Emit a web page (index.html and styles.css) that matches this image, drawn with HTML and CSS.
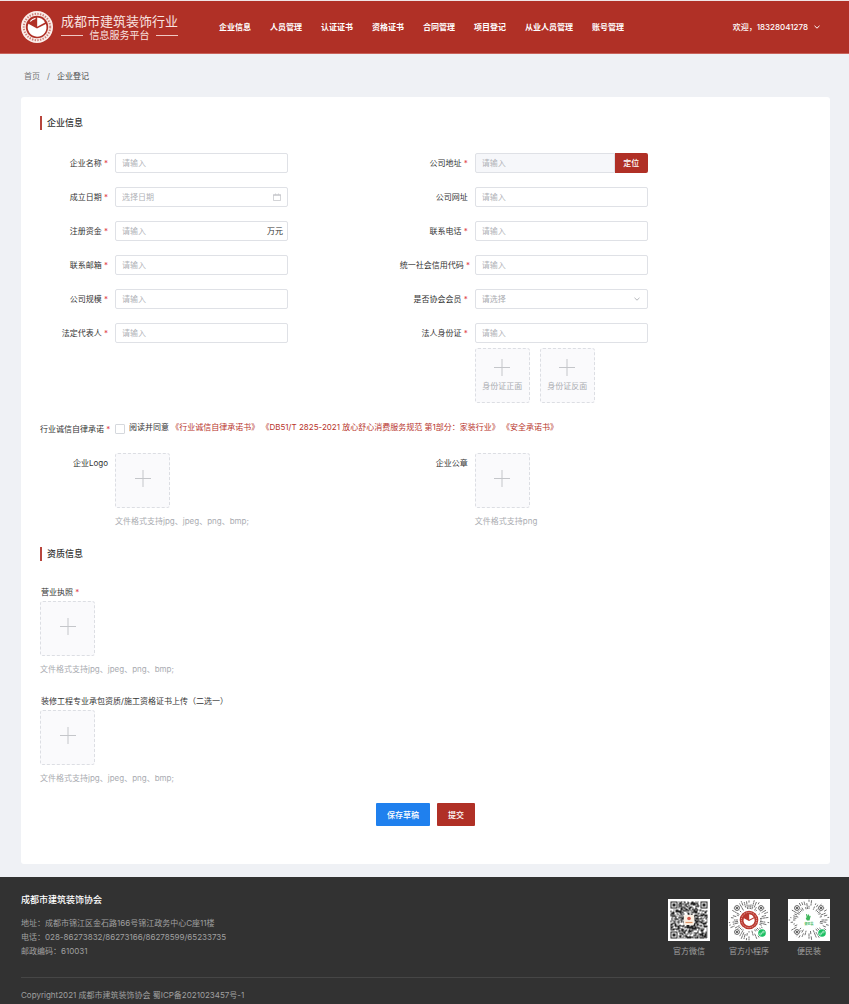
FILE: index.html
```html
<!DOCTYPE html>
<html lang="zh-CN">
<head>
    <meta charset="UTF-8">
    <meta name="viewport" content="width=device-width, initial-scale=1.0">
    <title>企业登记</title>
    <link rel="stylesheet" href="styles.css">
</head>
<body>

    <svg class="defs" width="0" height="0" aria-hidden="true">
        <symbol id="plus" viewBox="0 0 16 18">
            <path d="M8 0v17M0 8.5h16" fill="none" stroke="#c4c6ca" stroke-width="1"/>
        </symbol>
        <symbol id="arrow" viewBox="0 0 8 8">
            <path d="M1.5 2.8 4 5.2 6.5 2.8" fill="none" stroke="currentColor" stroke-width="1"/>
        </symbol>
    </svg>

    <header class="header">
        <a href="#" class="brand">
            <svg class="brand-logo" viewBox="0 0 32 32" aria-hidden="true">
                <circle cx="16" cy="16" r="16" fill="#fbeeea"/>
                <circle cx="16" cy="16" r="13.2" fill="none" stroke="#b85048" stroke-width="2" stroke-dasharray="1.4 1.3" stroke-opacity="0.7"/>
                <circle cx="16" cy="16" r="11.2" fill="#b03026"/>
                <path d="M16 17.5 7.4 12.8A9.400 9.400 0 1 0 24.900 13Z" fill="#fff"/>
                <path d="M16.200 15.800V6.600a9.400 9.400 0 0 1 7.800 4.900Z" fill="#fff"/>
                <path d="M8.700 10.200a9.400 9.400 0 0 1 5.800-3.500v1.200a8.200 8.200 0 0 0-4.800 2.900Z" fill="#fff"/>
            </svg>
            <span class="brand-text">
                <span class="brand-name">成都市建筑装饰行业</span>
                <span class="brand-sub">信息服务平台</span>
            </span>
        </a>
        <nav class="nav">
            <a href="#">企业信息</a>
            <a href="#">人员管理</a>
            <a href="#">认证证书</a>
            <a href="#">资格证书</a>
            <a href="#">合同管理</a>
            <a href="#">项目登记</a>
            <a href="#">从业人员管理</a>
            <a href="#">账号管理</a>
        </nav>
        <button type="button" class="user">欢迎，18328041278 <svg class="icon"><use href="#arrow"/></svg></button>
    </header>

    <div class="breadcrumb">
        <a href="#">首页</a>
        <span>/</span>
        <span class="current">企业登记</span>
    </div>

    <main class="card">
        <form id="companyForm">
            <h2 class="section-title">企业信息</h2>

            <div class="columns">
                <div class="column">
                    <div class="form-group">
                        <label for="name">企业名称 <i>*</i></label>
                        <input type="text" id="name" name="name" placeholder="请输入">
                    </div>
                    <div class="form-group">
                        <label for="date">成立日期 <i>*</i></label>
                        <div class="box">
                            <input type="text" id="date" name="date" placeholder="选择日期">
                            <svg class="icon calendar" viewBox="0 0 8 8"><path d="M.5 1.5h7v6h-7zM2.5 .5v1M5.5 .5v1M.5 2.500h7" fill="none" stroke="currentColor" stroke-width=".6"/></svg>
                        </div>
                    </div>
                    <div class="form-group">
                        <label for="capital">注册资金 <i>*</i></label>
                        <div class="box">
                            <input type="text" id="capital" name="capital" placeholder="请输入">
                            <span class="unit">万元</span>
                        </div>
                    </div>
                    <div class="form-group">
                        <label for="email">联系邮箱 <i>*</i></label>
                        <input type="email" id="email" name="email" placeholder="请输入">
                    </div>
                    <div class="form-group">
                        <label for="scale">公司规模 <i>*</i></label>
                        <input type="text" id="scale" name="scale" placeholder="请输入">
                    </div>
                    <div class="form-group">
                        <label for="legal">法定代表人 <i>*</i></label>
                        <input type="text" id="legal" name="legal" placeholder="请输入">
                    </div>
                </div>

                <div class="column">
                    <div class="form-group">
                        <label for="address">公司地址 <i>*</i></label>
                        <div class="box">
                            <input type="text" id="address" name="address" class="readonly" placeholder="请输入" readonly>
                            <button type="button" class="locate">定位</button>
                        </div>
                    </div>
                    <div class="form-group">
                        <label for="website">公司网址</label>
                        <input type="text" id="website" name="website" placeholder="请输入">
                    </div>
                    <div class="form-group">
                        <label for="phone">联系电话 <i>*</i></label>
                        <input type="text" id="phone" name="phone" placeholder="请输入">
                    </div>
                    <div class="form-group">
                        <label for="creditCode">统一社会信用代码 <i>*</i></label>
                        <input type="text" id="creditCode" name="creditCode" placeholder="请输入">
                    </div>
                    <div class="form-group">
                        <label for="member">是否协会会员 <i>*</i></label>
                        <div class="box">
                            <select id="member" name="member">
                                <option value="">请选择</option>
                                <option value="1">是</option>
                                <option value="0">否</option>
                            </select>
                            <svg class="icon select-arrow"><use href="#arrow"/></svg>
                        </div>
                    </div>
                    <div class="form-group">
                        <label for="idCard">法人身份证 <i>*</i></label>
                        <input type="text" id="idCard" name="idCard" placeholder="请输入">
                    </div>
                    <div class="id-uploads">
                        <label class="upload"><input type="file" name="idFront"><svg><use href="#plus"/></svg><span>身份证正面</span></label>
                        <label class="upload"><input type="file" name="idBack"><svg><use href="#plus"/></svg><span>身份证反面</span></label>
                    </div>
                </div>
            </div>

            <div class="form-group promise">
                <label for="agree">行业诚信自律承诺 <i>*</i></label>
                <input type="checkbox" id="agree" name="agree">
                <p>阅读并同意 <a href="#">《行业诚信自律承诺书》</a> <a href="#">《DB51/T 2825-2021 放心舒心消费服务规范 第1部分：家装行业》</a> <a href="#">《安全承诺书》</a></p>
            </div>

            <div class="columns">
                <div class="form-group file-group">
                    <label for="logo">企业Logo</label>
                    <div>
                        <label class="upload"><input type="file" id="logo" name="logo"><svg><use href="#plus"/></svg></label>
                        <p class="hint">文件格式支持jpg、jpeg、png、bmp;</p>
                    </div>
                </div>
                <div class="form-group file-group">
                    <label for="seal">企业公章</label>
                    <div>
                        <label class="upload"><input type="file" id="seal" name="seal"><svg><use href="#plus"/></svg></label>
                        <p class="hint">文件格式支持png</p>
                    </div>
                </div>
            </div>

            <h2 class="section-title second">资质信息</h2>

            <div class="cert">
                <label class="cert-label" for="license">营业执照 <i>*</i></label>
                <label class="upload"><input type="file" id="license" name="license"><svg><use href="#plus"/></svg></label>
                <p class="hint">文件格式支持jpg、jpeg、png、bmp;</p>
            </div>
            <div class="cert">
                <label class="cert-label" for="cert">装修工程专业承包资质/施工资格证书上传（二选一）</label>
                <label class="upload"><input type="file" id="cert" name="cert"><svg><use href="#plus"/></svg></label>
                <p class="hint">文件格式支持jpg、jpeg、png、bmp;</p>
            </div>

            <div class="buttons">
                <button type="button" class="draft">保存草稿</button>
                <button type="submit" class="submit">提交</button>
            </div>
        </form>
    </main>

    <footer class="footer">
        <div class="footer-main">
            <div class="contact">
                <h3>成都市建筑装饰协会</h3>
                <p>地址：成都市锦江区金石路166号锦江政务中心C座11楼</p>
                <p>电话：028-86273832/86273166/86278599/65233735</p>
                <p>邮政编码：610031</p>
            </div>
            <div class="codes">
                <figure>
                    <svg viewBox="0 0 42 42">
                        <rect width="42" height="42" fill="#fff"/>
                        <path id="qrModules" fill="#222"/>
                        <rect x="16" y="16" width="10" height="10" rx="1" fill="#fbf1e4"/>
                        <circle cx="21" cy="19.5" r="1.8" fill="#d4574a"/>
                        <path d="M17.5 23.5h7" stroke="#dd9468" stroke-width="1.2"/>
                    </svg>
                    <figcaption>官方微信</figcaption>
                </figure>
                <figure>
                    <svg viewBox="0 0 42 42">
                        <rect width="42" height="42" fill="#fff"/>
                        <g class="rays"></g>
                        <circle cx="21" cy="21" r="9.8" fill="#fff"/>
                        <circle cx="21" cy="21" r="9.3" fill="#b9372e"/>
                        <circle cx="21" cy="21" r="7.6" fill="none" stroke="#e8b5ae" stroke-width="1" stroke-dasharray="1 .9"/>
                        <path d="M21 22 15.900 19.200A5.600 5.600 0 1 0 26.300 19.300Z" fill="#fff"/>
                        <path d="M21.200 20.700V15.300a5.600 5.600 0 0 1 4.600 2.900Z" fill="#fff"/>
                        <use href="#mini"/>
                    </svg>
                    <figcaption>官方小程序</figcaption>
                </figure>
                <figure>
                    <svg viewBox="0 0 42 42">
                        <rect width="42" height="42" fill="#fff"/>
                        <g class="rays"></g>
                        <circle cx="21" cy="21" r="10.5" fill="#fff"/>
                        <path d="M19 21.500C17 19 18 18 18.800 19L18 15.500C18.500 14.500 19.300 15 19.800 17.500 20 14.500 21.300 14.500 21.300 17.500 22.500 16 23 17 22.300 18.500L21.500 21.500Z" fill="#3fb75c"/>
                        <text x="21" y="26" text-anchor="middle" class="code-name">便民装</text>
                        <g id="mini">
                            <circle cx="34" cy="34" r="4.5" fill="#fff"/>
                            <circle cx="34" cy="34" r="3.8" fill="#1dbf63"/>
                            <path d="M32.500 34.200c-1.500 0-1 2 .3 1.600 1.500-.6.800-3 2.300-3.600 1.300-.3 1.600 1.500.3 1.700" fill="none" stroke="#fff" stroke-width=".7"/>
                        </g>
                    </svg>
                    <figcaption>便民装</figcaption>
                </figure>
            </div>
        </div>
        <p class="copyright">Copyright2021 成都市建筑装饰协会 蜀ICP备2021023457号-1</p>
    </footer>

    <script src="codes.js"></script>
</body>
</html>
```
FILE: styles.css
```css
* {
    box-sizing: border-box;
}
body {
    margin: 0;
    background-color: #eff1f5;
    color: #333;
    font-family: Inter, "Noto Sans CJK SC", sans-serif;
    font-size: 8px;
    line-height: 14px;
    text-spacing-trim: space-all;
}
a {
    color: inherit;
    text-decoration: none;
}
p, h2, h3, figure {
    margin: 0;
}
input, select, button {
    font: inherit;
    color: inherit;
}
button {
    border: none;
    cursor: pointer;
}
i {
    color: #e0404a;
    font-style: normal;
}
.defs {
    display: block;
    position: absolute;
}
.icon {
    width: 8px;
    height: 8px;
}

/* header */
.header {
    display: flex;
    align-items: center;
    height: 54px;
    padding: 0 28px 0 21px;
    border-top: 1px solid #f0e4e4;
    border-bottom: 1px solid #c9645b;
    background-color: #b03026;
    color: #fff;
}
.brand {
    display: flex;
    align-items: center;
    gap: 8px;
    width: 198px;
}
.brand-logo {
    width: 32px;
    height: 32px;
}
.brand-text {
    color: #f9e4e1;
}
.brand-name {
    display: block;
    font-size: 13px;
    line-height: 16px;
}
.brand-sub {
    display: flex;
    align-items: center;
    justify-content: space-between;
    font-size: 10px;
    line-height: 13px;
}
.brand-sub::before,
.brand-sub::after {
    content: "";
    width: 22px;
    height: 1px;
    background-color: #f0c8c3;
}
.nav {
    display: flex;
    gap: 19px;
    font-weight: bold;
    white-space: nowrap;
}
.user {
    display: flex;
    align-items: center;
    gap: 5px;
    margin-left: auto;
    padding: 0;
    background: none;
    font-weight: 500;
    white-space: nowrap;
}

.breadcrumb {
    display: flex;
    gap: 7px;
    padding: 15px 24px 14px;
    color: #777;
}
.breadcrumb .current {
    color: #444;
}

/* form card */
.card {
    margin: 0 19px 13px 21px;
    padding: 19px 19px 38px;
    border-radius: 3px;
    background-color: #fff;
}
.section-title {
    padding-left: 5px;
    border-left: 2px solid #b8453c;
    font-size: 9px;
    font-weight: 500;
    line-height: 14px;
}
.columns {
    display: grid;
    grid-template-columns: 7fr 8fr;
}
.column {
    display: flex;
    flex-direction: column;
    gap: 14px;
    padding-top: 23px;
}
.form-group {
    display: flex;
    align-items: center;
}
.form-group > label {
    width: 68px;
    margin-right: 7px;
    text-align: right;
    white-space: nowrap;
}
.form-group > input,
.box {
    width: 173px;
}
.box {
    display: flex;
    position: relative;
}
input[type="text"],
input[type="email"],
select {
    min-width: 0;
    height: 20px;
    padding: 0 6px;
    border: 1px solid #dfe1e6;
    border-radius: 2px;
    background-color: #fff;
}
.box input,
.box select {
    flex: 1;
}
select {
    appearance: none;
    color: #aaacb1;
}
::placeholder {
    color: #b0b2b7;
}
.box .readonly {
    border-radius: 2px 0 0 2px;
    background-color: #f6f7fa;
}
.locate {
    width: 33px;
    padding: 0;
    border-radius: 0 2px 2px 0;
    background-color: #b03026;
    color: #fff;
    font-weight: 500;
}
.calendar,
.select-arrow {
    position: absolute;
    top: 6px;
    right: 7px;
    color: #b5b7bc;
    pointer-events: none;
}
.unit {
    position: absolute;
    top: 3px;
    right: 5px;
}

/* uploads */
.upload {
    display: flex;
    flex-direction: column;
    align-items: center;
    justify-content: center;
    gap: 2px;
    width: 55px;
    height: 55px;
    padding-bottom: 4px;
    border: 1px dashed #dcdee3;
    border-radius: 3px;
    background-color: #fafafc;
    color: #aaacb1;
    cursor: pointer;
}
.upload input {
    display: none;
}
.upload svg {
    width: 16px;
    height: 18px;
}
.id-uploads {
    display: flex;
    gap: 10px;
    margin-top: -9px;
    margin-left: 75px;
}
.id-uploads .upload {
    padding-bottom: 0;
}
.promise {
    padding: 17px 0 15px;
}
.promise p {
    padding-bottom: 4px;
}
.promise a {
    color: #b8342b;
}
.promise input[type="checkbox"] {
    appearance: none;
    width: 10px;
    height: 10px;
    margin: 0 4px 0 0;
    border: 1px solid #d5d8dd;
    border-radius: 1px;
}
.promise input[type="checkbox"]:checked {
    background-color: #b03026;
}
.file-group {
    align-items: flex-start;
}
.file-group > label {
    padding-top: 3px;
}
.hint {
    padding-top: 6px;
    color: #aaacb1;
}
.second {
    margin: 19px 0 24px;
}
.cert {
    margin-bottom: 18px;
}
.cert-label {
    display: block;
    padding: 0 1px 2px;
}
.buttons {
    display: flex;
    justify-content: center;
    gap: 7px;
}
.buttons button {
    height: 23px;
    padding: 0 11px;
    border-radius: 1px;
    color: #fff;
    font-weight: 500;
}
.buttons .draft {
    background-color: #1f80ee;
}
.buttons .submit {
    background-color: #b03026;
}

/* footer */
.footer {
    padding: 16px 19px 2px 21px;
    background-color: #323232;
    color: #a0a0a0;
}
.footer-main {
    display: flex;
    justify-content: space-between;
    padding-bottom: 19px;
    border-bottom: 1px solid #464646;
}
.footer h3 {
    margin-bottom: 9px;
    color: #fff;
    font-size: 9px;
    font-weight: 500;
}
.codes {
    display: flex;
    gap: 18px;
    padding-top: 6px;
}
.codes figure {
    display: flex;
    flex-direction: column;
    align-items: center;
    width: 42px;
    white-space: nowrap;
}
.codes svg {
    width: 42px;
    height: 42px;
    margin-bottom: 3px;
}
.code-name {
    fill: #3fb75c;
    font-size: 3px;
    font-weight: bold;
}
.copyright {
    padding-top: 10px;
}
```
FILE: codes.js
```js
// small repeatable generator so the codes look the same on every load
let seed = 7;
function rand() {
    seed = (seed * 16807) % 2147483647;
    return seed / 2147483647;
}

// square code: 37 modules, three finder marks in the corners
function squareCode() {
    const n = 37;
    const start = 2.5;
    let d = '';
    const cell = (x, y) => {
        d += `M${start + x} ${start + y}h1v1h-1z`;
    };
    const finders = [[0, 0], [n - 7, 0], [0, n - 7]];
    for (let y = 0; y < n; y++) {
        for (let x = 0; x < n; x++) {
            const f = finders.find(p => x >= p[0] - 1 && x <= p[0] + 7 && y >= p[1] - 1 && y <= p[1] + 7);
            if (f) {
                const r = Math.max(Math.abs(x - f[0] - 3), Math.abs(y - f[1] - 3));
                if (r === 3 || r < 2) cell(x, y);
            } else if (rand() < 0.58) {
                cell(x, y);
            }
        }
    }
    document.getElementById('qrModules').setAttribute('d', d);
}

// round code: broken rays around the logo and three ring marks
function roundCode(group) {
    let d = '';
    for (let i = 0; i < 48; i++) {
        const a = i * Math.PI / 24;
        const cos = Math.cos(a);
        const sin = Math.sin(a);
        let r = 11.5;
        while (r < 19.5) {
            const end = Math.min(r + 0.3 + rand() * 2.5, 20);
            if (rand() < 0.6) {
                d += `M${21 + r * cos} ${21 + r * sin}L${21 + end * cos} ${21 + end * sin}`;
            }
            r = end + 1.1;
        }
    }
    let html = `<path d="${d}" stroke="#333" stroke-width=".7" stroke-linecap="round"/>`;
    [[9, 9], [33, 9], [9, 33]].forEach(([x, y]) => {
        html += `<circle cx="${x}" cy="${y}" r="3.6" fill="#fff"/>`
            + `<circle cx="${x}" cy="${y}" r="2.4" fill="none" stroke="#333" stroke-width=".8"/>`
            + `<circle cx="${x}" cy="${y}" r="1" fill="#333"/>`;
    });
    group.innerHTML = html;
}

squareCode();
document.querySelectorAll('.rays').forEach(roundCode);
```
